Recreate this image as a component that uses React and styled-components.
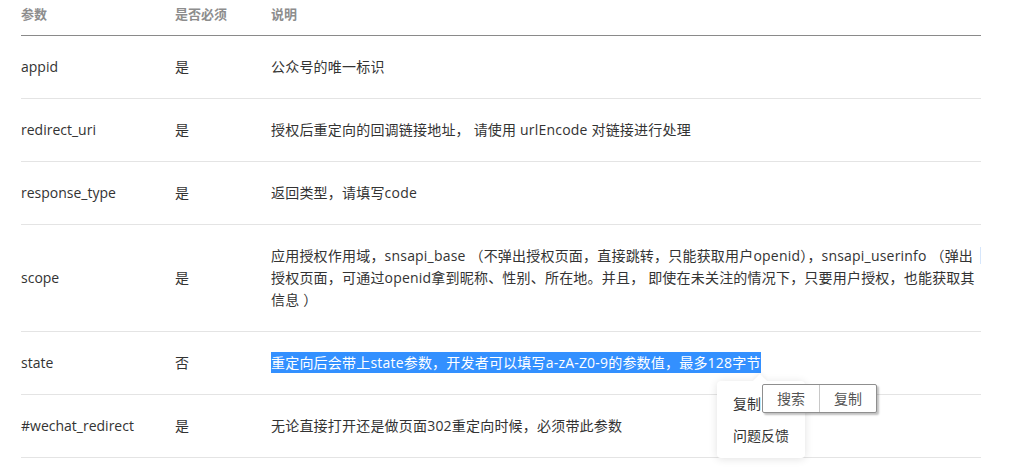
import React from 'react'
import styled, { createGlobalStyle } from 'styled-components'

const GlobalStyle = createGlobalStyle`
  body {
    margin: 0;
    background: #ffffff;
    font-family: "Open Sans", "Noto Sans CJK SC", sans-serif;
    color: #333333;
  }
`

const Page = styled.div`
  position: relative;
  width: 1016px;
  height: 474px;
  overflow: hidden;
  padding: 0 35px 0 21px;
  box-sizing: border-box;
`

const Table = styled.div`
  width: 960px;
`

const Row = styled.div`
  display: grid;
  grid-template-columns: 154px 96px 1fr;
  align-items: center;
  min-height: ${(p) => (p.$head ? '36px' : '63px')};
  border-bottom: 1px solid ${(p) => (p.$head ? '#8a8a8a' : '#e4e4e4')};
  font-size: ${(p) => (p.$head ? '13px' : '14px')};
  font-weight: ${(p) => (p.$head ? 600 : 400)};
  color: ${(p) => (p.$head ? '#8d8d8d' : '#333333')};
  padding: ${(p) => (p.$head ? '0 0 8px' : p.$tall ? '20px 0' : '0')};
  box-sizing: border-box;
  & > div:last-child {
    padding-right: 2px;
  }
`

const Cell = styled.div`
  line-height: 22px;
  position: relative;
`

const DescCell = styled(Cell)`
  letter-spacing: ${(p) => (p.$head ? '0' : '0.2px')};
  white-space: nowrap;
`

const Selected = styled.span`
  background: #3390ff;
  color: #ffffff;
  padding: 1px 0;
`

const Caret = styled.span`
  position: absolute;
  right: 0;
  top: 2px;
  width: 1px;
  height: 17px;
  background: #d6e6fb;
`

const Menu = styled.div`
  position: absolute;
  left: 717px;
  top: 381px;
  width: 88px;
  padding: 7px 0 6px;
  background: #ffffff;
  border-radius: 4px;
  box-shadow: 0 1px 8px rgba(0, 0, 0, 0.12);
  &::before {
    content: '';
    position: absolute;
    top: -5px;
    left: 38px;
    width: 10px;
    height: 10px;
    background: #ffffff;
    transform: rotate(45deg);
    box-shadow: -2px -2px 4px rgba(0, 0, 0, 0.04);
  }
`

const MenuItem = styled.div`
  position: relative;
  padding-left: 16px;
  height: 32px;
  line-height: 32px;
  font-size: 14px;
  color: #333333;
`

const Toolbar = styled.div`
  position: absolute;
  left: 762px;
  top: 384px;
  display: flex;
  background: #ffffff;
  border: 1px solid #8f8f8f;
  border-radius: 2px;
  box-shadow: 2px 2px 2px rgba(0, 0, 0, 0.25);
`

const ToolButton = styled.div`
  width: 56px;
  height: 27px;
  line-height: 27px;
  text-align: center;
  font-size: 14px;
  color: #555555;
  & + & {
    border-left: 1px solid #c8c8c8;
  }
`

const rows = [
  { name: 'appid', must: '是', desc: ['公众号的唯一标识'] },
  { name: 'redirect_uri', must: '是', desc: ['授权后重定向的回调链接地址， 请使用 urlEncode 对链接进行处理'] },
  { name: 'response_type', must: '是', desc: ['返回类型，请填写code'] },
  {
    name: 'scope',
    must: '是',
    tall: true,
    desc: [
      '应用授权作用域，snsapi_base （不弹出授权页面，直接跳转，只能获取用户openid），snsapi_userinfo （弹出',
      '授权页面，可通过openid拿到昵称、性别、所在地。并且， 即使在未关注的情况下，只要用户授权，也能获取其',
      '信息 ）',
    ],
  },
  { name: 'state', must: '否', selected: true, desc: ['重定向后会带上state参数，开发者可以填写a-zA-Z0-9的参数值，最多128字节'] },
  { name: '#wechat_redirect', must: '是', desc: ['无论直接打开还是做页面302重定向时候，必须带此参数'] },
]

export default function App() {
  return (
    <Page>
      <GlobalStyle />
      <Table>
        <Row $head>
          <Cell>参数</Cell>
          <Cell>是否必须</Cell>
          <DescCell $head>说明</DescCell>
        </Row>
        {rows.map((r) => (
          <Row key={r.name} $tall={r.tall}>
            <Cell>{r.name}</Cell>
            <Cell>{r.must}</Cell>
            <DescCell>
              {r.desc.map((line, i) => (
                <React.Fragment key={i}>
                  {i > 0 && <br />}
                  {r.selected ? <Selected>{line}</Selected> : line}
                </React.Fragment>
              ))}
              {r.tall && <Caret />}
            </DescCell>
          </Row>
        ))}
      </Table>
      <Menu>
        <MenuItem>复制</MenuItem>
        <MenuItem>问题反馈</MenuItem>
      </Menu>
      <Toolbar>
        <ToolButton>搜索</ToolButton>
        <ToolButton>复制</ToolButton>
      </Toolbar>
    </Page>
  )
}
